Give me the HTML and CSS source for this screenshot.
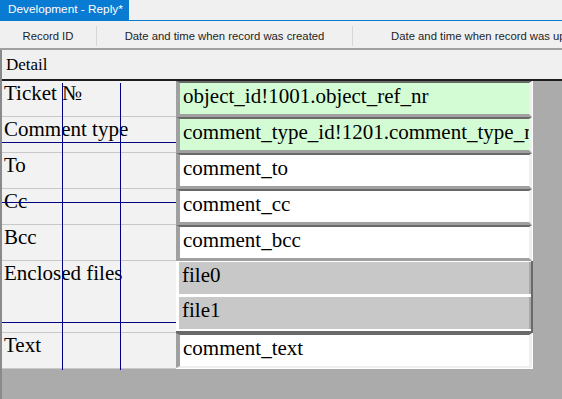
FILE: index.html
```html
<!DOCTYPE html>
<html>
<head>
	<meta charset="UTF-8">
	<title>Development - Reply*</title>
	<link rel="stylesheet" href="styles.css">
</head>
<body>
	<div class="tabbar">
		<div class="tab">Development - Reply*</div>
	</div>
	<div class="header">
		<div class="col c1">Record ID</div>
		<div class="col c2">Date and time when record was created</div>
		<div class="col c3">Date and time when record was updated</div>
	</div>
	<div class="pane">
		<div class="detail">Detail</div>
		<div class="form">
			<div class="grid">
				<div class="label">Ticket №</div>
				<div class="field"><div class="input green">object_id!1001.object_ref_nr</div></div>

				<div class="label">Comment type</div>
				<div class="field"><div class="input green">comment_type_id!1201.comment_type_nm</div></div>

				<div class="label">To</div>
				<div class="field"><div class="input">comment_to</div></div>

				<div class="label">Cc</div>
				<div class="field"><div class="input">comment_cc</div></div>

				<div class="label">Bcc</div>
				<div class="field"><div class="input">comment_bcc</div></div>

				<div class="label">Enclosed files</div>
				<div class="field files">
					<div class="file">file0</div>
					<div class="file">file1</div>
				</div>

				<div class="label">Text</div>
				<div class="field"><div class="input last">comment_text</div></div>

				<div class="vline v1"></div>
				<div class="vline v2"></div>
				<div class="hline h1"></div>
				<div class="hline h2"></div>
				<div class="hline h3"></div>
			</div>
			<div class="rest"></div>
		</div>
	</div>
</body>
</html>
```

FILE: styles.css
```css
*{
	margin: 0px;
	padding: 0px;
	box-sizing: border-box;
}
body{
	width: 562px;
	height: 399px;
	overflow: hidden;
	background: #ababab;
	font-family: "Liberation Serif", serif;
}
.tabbar{
	height: 21px;
	background: #f0f0f0;
	border-bottom: 1px solid #0a7bd3;
}
.tab{
	width: 129px;
	height: 20px;
	background: #0a7bd3;
	color: white;
	font-family: "Liberation Sans", sans-serif;
	font-size: 11.8px;
	line-height: 19px;
	padding-left: 8px;
	white-space: nowrap;
}
.header{
	display: flex;
	height: 29px;
	background: #f0f0f0;
	border-bottom: 2px solid #a0a0a0;
	overflow: hidden;
	font-family: "Liberation Sans", sans-serif;
	font-size: 11.3px;
	color: #1e1e1e;
}
.col{
	flex-shrink: 0;
	display: flex;
	align-items: center;
	justify-content: center;
	white-space: nowrap;
	position: relative;
}
.c1{
	width: 97px;
	border-right: 1px solid #d6d6d6;
	margin: 5px 0 2px 0;
}
.c2{
	width: 256px;
	border-right: 1px solid #d6d6d6;
	margin: 5px 0 2px 0;
}
.c3{
	width: 279px;
	margin: 5px 0 2px 0;
}
.pane{
	border-left: 2px solid #8a8a8a;
	height: 350px;
}
.detail{
	height: 29px;
	background: #f0f0f0;
	font-size: 17px;
	padding: 5px 0 0 4px;
}
.form{
	display: flex;
}
.grid{
	position: relative;
	display: grid;
	grid-template-columns: 174px 357px;
	grid-template-rows: 36px 36px 36px 36px 36px 72px 36px;
	border-top: 2px solid #1e1e1e;
	font-size: 21px;
}
.rest{
	flex: 1;
	border-top: 2px solid #1e1e1e;
}
.label{
	background: #f2f2f2;
	border-bottom: 1px solid #c8c8c8;
	padding-left: 2px;
	white-space: nowrap;
	line-height: 24px;
}
.field{
	background: white;
	padding-right: 1px;
	overflow: hidden;
}
.input{
	height: 100%;
	border-top: 2px solid #696969;
	border-left: 4px solid #a0a0a0;
	border-right: 3px solid #efefef;
	border-bottom: 3px solid #a0a0a0;
	padding: 1px 0 0 3px;
	line-height: 24px;
	white-space: nowrap;
	overflow: hidden;
	background: white;
}
.green{
	background: #d4fcd4;
}
.last{
	border-bottom: 2px solid #efefef;
	margin-bottom: 1px;
	height: 35px;
}
.files{
	padding: 1px 0 0 3px;
	border-right: 2px solid #696969;
	border-bottom: 2px solid #696969;
}
.file{
	height: 32px;
	background: #c8c8c8;
	border-right: 2px solid #a8a8a8;
	padding: 1px 0 0 3px;
	line-height: 24px;
	margin-bottom: 3px;
}
.vline{
	position: absolute;
	top: 2px;
	width: 1px;
	height: 287px;
	background: #000080;
}
.v1{
	left: 60px;
}
.v2{
	left: 118px;
}
.hline{
	position: absolute;
	left: 0px;
	width: 174px;
	height: 1px;
	background: #000080;
}
.h1{
	top: 61px;
}
.h2{
	top: 121px;
}
.h3{
	top: 241px;
}
```
